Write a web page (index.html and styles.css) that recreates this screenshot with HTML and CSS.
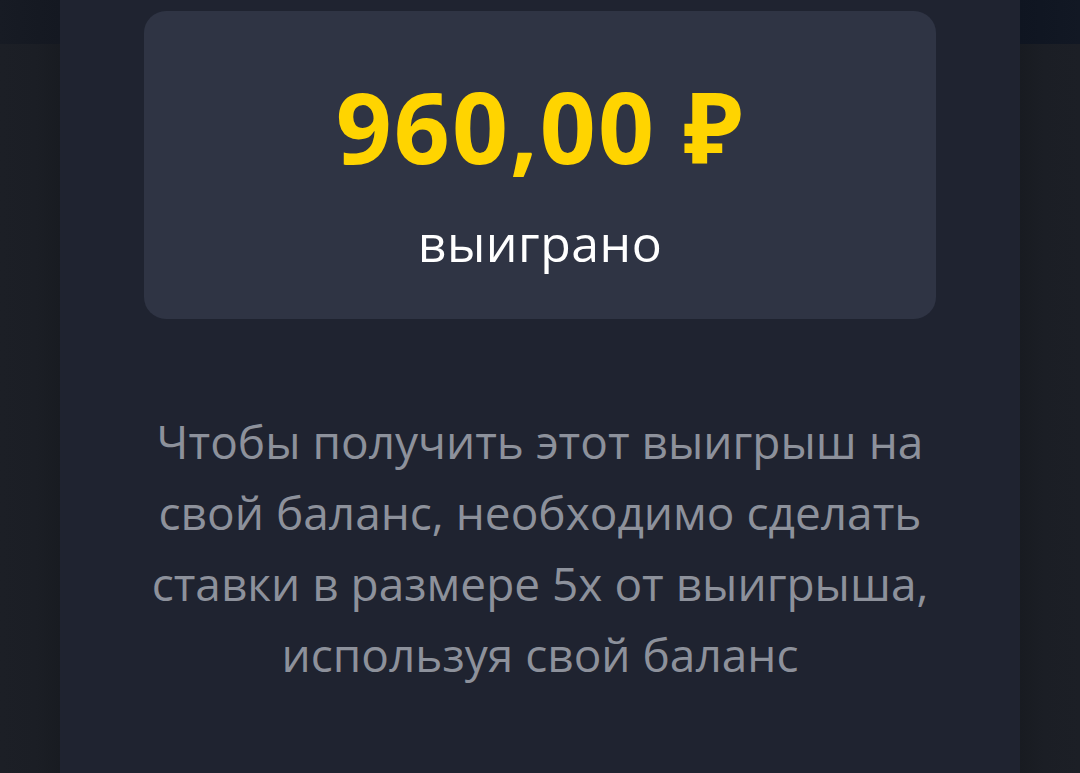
FILE: index.html
```html
<!DOCTYPE html>
<html lang="ru">
<head>
<meta charset="utf-8">
<title>Выигрыш</title>
<link rel="stylesheet" href="styles.css">
</head>
<body>
<div class="page">
  <div class="gutter gutter-left"><div class="band"></div></div>
  <main class="panel">
    <section class="win-card">
      <div class="amount">960,00 ₽</div>
      <div class="label">выиграно</div>
    </section>
    <p class="note">Чтобы получить этот выигрыш на свой баланс, необходимо сделать ставки в размере 5х от выигрыша, используя свой баланс</p>
  </main>
  <div class="gutter gutter-right"><div class="band"></div></div>
</div>
</body>
</html>
```
FILE: styles.css
```css
* { box-sizing: border-box; }
html, body { margin: 0; padding: 0; }
body {
  width: 1080px;
  height: 773px;
  overflow: hidden;
  background: #1b1e25;
  font-family: "Open Sans", "Noto Sans", sans-serif;
}
.page {
  display: flex;
  height: 773px;
}
.gutter {
  width: 60px;
  flex: none;
  display: flex;
  flex-direction: column;
}
.gutter-left { background: linear-gradient(to right, #1c1f26 0%, #1b1e25 60%, #181b21 100%); }
.gutter-right { background: linear-gradient(to left, #1c1f26 0%, #1b1e25 60%, #181b21 100%); }
.band { height: 44px; }
.gutter-left .band { background: linear-gradient(to right, #171b24, #141821); }
.gutter-right .band { background: linear-gradient(to left, #121824, #0f1521); }
.panel {
  width: 960px;
  flex: none;
  background: #1f2330;
  padding: 11px 84px 0;
}
.win-card {
  height: 308px;
  background: #2f3444;
  border-radius: 22px;
  display: flex;
  flex-direction: column;
  align-items: center;
  padding-top: 60px;
}
.amount {
  color: #ffd400;
  font-weight: 700;
  font-size: 98px;
  line-height: 110px;
  letter-spacing: 2px;
}
.label {
  color: #ffffff;
  font-size: 50px;
  line-height: 60px;
  margin-top: 32px;
  letter-spacing: 0.5px;
}
.note {
  margin: 87px 0 0;
  color: #8d919b;
  font-size: 46px;
  line-height: 71px;
  text-align: center;
}
```
